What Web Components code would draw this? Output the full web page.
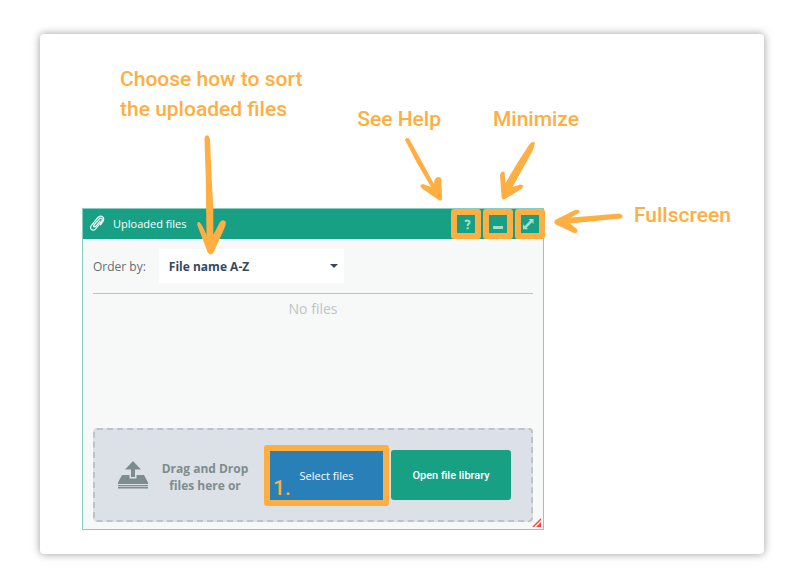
<!DOCTYPE html>
<html lang="en">
<head>
<meta charset="utf-8">
<title>Uploaded files</title>
<style>
  body {
    margin: 0;
    background: #fff;
    font-family: "Open Sans", "Noto Sans", sans-serif;
  }
</style>
</head>
<body>
<guide-card>
  <upload-panel heading="Uploaded files">
    <panel-button slot="tools" label="Help">
      <svg width="18" height="18" viewBox="0 0 18 18"><path d="M8 6.400Q9.600 5.200 11.400 5.700Q13.400 6.600 12.100 8.400Q10.600 9.400 10.700 11" fill="none" stroke="currentColor" stroke-width="2"/><path d="M9.600 12.200h2.200v2.100H9.600z" fill="currentColor"/></svg>
    </panel-button>
    <panel-button slot="tools" label="Minimize">
      <svg width="18" height="18" viewBox="0 0 18 18"><path d="M4 11h10v3H4z" fill="currentColor"/></svg>
    </panel-button>
    <panel-button slot="tools" label="Fullscreen">
      <svg width="18" height="18" viewBox="0 0 18 18"><path d="M7.500 4H12.500V9L10.800 7.400 5.600 12.700 7.200 14.200H2V9.200L3.800 10.900 9.100 5.600z" fill="currentColor"/></svg>
    </panel-button>
    <file-order></file-order>
    <drop-zone slot="footer"></drop-zone>
  </upload-panel>
</guide-card>

<script>
class GuideCard extends HTMLElement {
    constructor() {
        super();
        this.attachShadow({ mode: "open" }).innerHTML = `
        <style>
            :host {
                display: block;
                padding: 34px 40px 28px;
            }
            #card {
                padding: 174px 220px 24px 42px;
                border-radius: 4px;
                background: #fff;
                box-shadow: 0 0 8px rgba(0, 0, 0, 0.4);
            }
            #stage {
                position: relative;
            }
            .note {
                position: absolute;
                color: #ffae42;
                font: 500 21px/30px Roboto, sans-serif;
                white-space: nowrap;
            }
            .arrow {
                position: absolute;
                fill: #ffae42;
                pointer-events: none;
            }
            #sort { left: 38px; top: -144px; }
            #help { right: 103px; top: -104px; }
            #minimize { right: -35px; top: -104px; }
            #fullscreen { left: 100%; top: -8px; margin-left: 90px; }
            #sort-arrow { left: 108px; top: -78px; }
            #right-arrows { right: -88px; top: -78px; }
        </style>
        <div id="card">
            <div id="stage">
                <slot></slot>
                <div class="note" id="sort">Choose how to sort<br>the uploaded files</div>
                <div class="note" id="help">See Help</div>
                <div class="note" id="minimize">Minimize</div>
                <div class="note" id="fullscreen">Fullscreen</div>
                <svg class="arrow" id="sort-arrow" width="50" height="130" viewBox="190 130 50 130">
                    <path d="M204.500 140Q204.500 135.500 207 135.300Q209.500 136 210 140L211.500 175L213.300 208V235L220 222Q222.500 219 225.500 221.500Q226.500 224 224.500 228L213.500 252.500Q210.500 256.500 207.500 252L197.300 225Q196.800 221.500 199.500 222Q203 226 206.500 235L205.700 175Z"/>
                </svg>
                <svg class="arrow" id="right-arrows" width="232" height="110" viewBox="400 130 232 110">
                    <path d="M405 140Q405.500 137 409 138.500L421 160L434 184L434.500 180Q437 175 441 178Q442 187 442 199Q441.500 201.500 438.500 200L422 188.500Q418.500 185 423 184L431 187L417 163Z"/>
                    <path d="M529 145Q532 140 535 143L533 150L512.500 187L520 184.500Q525 184.500 522 188.500L506 198.500Q501 201 501.500 196L500 175Q501.500 170 504.500 172L505.500 183L518 162Z"/>
                    <path d="M619 213.500Q625 215 621 218.500L590 221.500L570 223.500L577 229Q579 233.500 574 233L556 224.500Q552.500 222 556 219.500L575 210Q580 209 579.500 212.500L571 217.500L590 216Z"/>
                </svg>
            </div>
        </div>
        `;
    }
} customElements.define("guide-card", GuideCard);

class UploadPanel extends HTMLElement {
    constructor() {
        super();
        this.attachShadow({ mode: "open" }).innerHTML = `
        <style>
            :host {
                display: block;
                border: 1px solid #84cfbf;
                background: #f7f9f9;
            }
            header {
                display: flex;
                align-items: center;
                height: 30px;
                padding-left: 6px;
                background: #18a085;
                color: #fff;
            }
            h2 {
                flex: 1;
                margin: 0 0 0 8px;
                font-size: 11px;
                line-height: 16px;
                font-weight: 400;
            }
            #tools {
                display: flex;
                gap: 2px;
                margin-right: -2px;
            }
            #body {
                display: flex;
                flex-direction: column;
                padding: 10px 10px 7px;
            }
            #empty {
                min-height: 134px;
                margin: 0;
                padding-top: 5px;
                box-sizing: border-box;
                color: #bdc3c7;
                font-size: 14px;
                line-height: 20px;
                text-align: center;
            }
        </style>
        <header>
            <svg width="16" height="18" viewBox="0 0 16 18" fill="none" stroke="#fff" stroke-width="1.200" stroke-linecap="round"><path d="M11 6L7 11Q5.600 12.500 4.800 11.700Q4.200 11 5.300 9.600L10 4.100Q11.500 2.500 12.800 3.600Q13.900 4.700 12.500 6.500L7 13.500Q4.800 16.200 2.500 14.600Q.6 13 2.500 10.300L8.500 2.900Q10.800.2 13.200 1.500Q15.800 3.300 13.900 6.500L11.500 9.800"/></svg>
            <h2></h2>
            <div id="tools"><slot name="tools"></slot></div>
        </header>
        <div id="body">
            <slot></slot>
            <p id="empty">No files</p>
            <slot name="footer"></slot>
        </div>
        `;
    }

    connectedCallback() {
        this.shadowRoot.querySelector("h2").textContent = this.getAttribute("heading");
    }
} customElements.define("upload-panel", UploadPanel);

class PanelButton extends HTMLElement {
    constructor() {
        super();
        this.attachShadow({ mode: "open" }).innerHTML = `
        <style>
            :host {
                display: block;
            }
            button {
                display: block;
                width: 30px;
                height: 30px;
                padding: 0;
                border: 6px solid #ffae42;
                border-radius: 3px;
                background: #18a085;
                color: #a6dbd0;
            }
            ::slotted(svg) {
                display: block;
            }
        </style>
        <button type="button"><slot></slot></button>
        `;
    }

    connectedCallback() {
        this.shadowRoot.querySelector("button").setAttribute("aria-label", this.getAttribute("label"));
    }
} customElements.define("panel-button", PanelButton);

class FileOrder extends HTMLElement {
    constructor() {
        super();
        this.attachShadow({ mode: "open" }).innerHTML = `
        <style>
            :host {
                display: flex;
                align-items: center;
                gap: 13px;
                padding-bottom: 10px;
                border-bottom: 1px solid #bdc3c7;
                font-size: 12px;
            }
            label {
                color: #666c70;
            }
            #box {
                display: grid;
                align-items: center;
                width: 185px;
            }
            select, svg {
                grid-area: 1 / 1;
            }
            select {
                appearance: none;
                height: 34px;
                padding: 0 24px 0 10px;
                border: 0;
                border-radius: 0;
                background: #fff;
                color: #34495e;
                font: 700 12px "Open Sans", sans-serif;
            }
            svg {
                justify-self: end;
                margin-right: 6px;
                pointer-events: none;
            }
        </style>
        <label for="order">Order by:</label>
        <div id="box">
            <select id="order"><option>File name A-Z</option></select>
            <svg width="8" height="4" viewBox="0 0 8 4"><path d="M0 0h8L4 4z" fill="#34495e"/></svg>
        </div>
        `;
    }
} customElements.define("file-order", FileOrder);

class DropZone extends HTMLElement {
    constructor() {
        super();
        this.attachShadow({ mode: "open" }).innerHTML = `
        <style>
            :host {
                display: flex;
                align-items: center;
                position: relative;
                height: 94px;
                padding: 0 20px 0 23px;
                box-sizing: border-box;
                border: 2px dashed #bdc3c7;
                border-radius: 4px;
                background: #dce1e8;
            }
            p {
                flex: 1;
                margin: 0 2px 0 0;
                padding-top: 4px;
                color: #7f8c8d;
                font-size: 12px;
                line-height: 17px;
                font-weight: 700;
                text-align: center;
            }
            button {
                width: 120px;
                height: 50px;
                padding: 0;
                border: 0;
                border-radius: 3px;
                background: #18a085;
                color: #fff;
                font: 500 11px Roboto, sans-serif;
            }
            #select {
                position: relative;
                box-sizing: border-box;
                width: 125px;
                height: 61px;
                margin-right: 2px;
                border: 6px solid #ffae42;
                background: #2980b9;
                font: 400 11px "Open Sans", sans-serif;
            }
            #step {
                position: absolute;
                left: 3px;
                bottom: 0;
                color: #ffae42;
                font: 500 21px/24px Roboto, sans-serif;
            }
            #grip {
                position: absolute;
                right: -11px;
                bottom: -8px;
            }
        </style>
        <svg width="30" height="28" viewBox="0 0 30 28" fill="#7f8c8d"><path d="M15 0L23 8.500H17V16H13V8.500H7zM4 14H11.500V17.500H18.500V14H26L30 21.500V23H0V21.500zM0 24H30V25.200H0zM0 26H30V27.500H0z"/></svg>
        <p>Drag and Drop<br>files here or</p>
        <button id="select" type="button">Select files<span id="step">1.</span></button>
        <button type="button">Open file library</button>
        <svg id="grip" width="10" height="10" viewBox="0 0 10 10"><path d="M0 9L9 0V2L2 9zM4 9L9 4V9z" fill="#e74c3c"/></svg>
        `;
    }
} customElements.define("drop-zone", DropZone);
</script>
</body>
</html>
